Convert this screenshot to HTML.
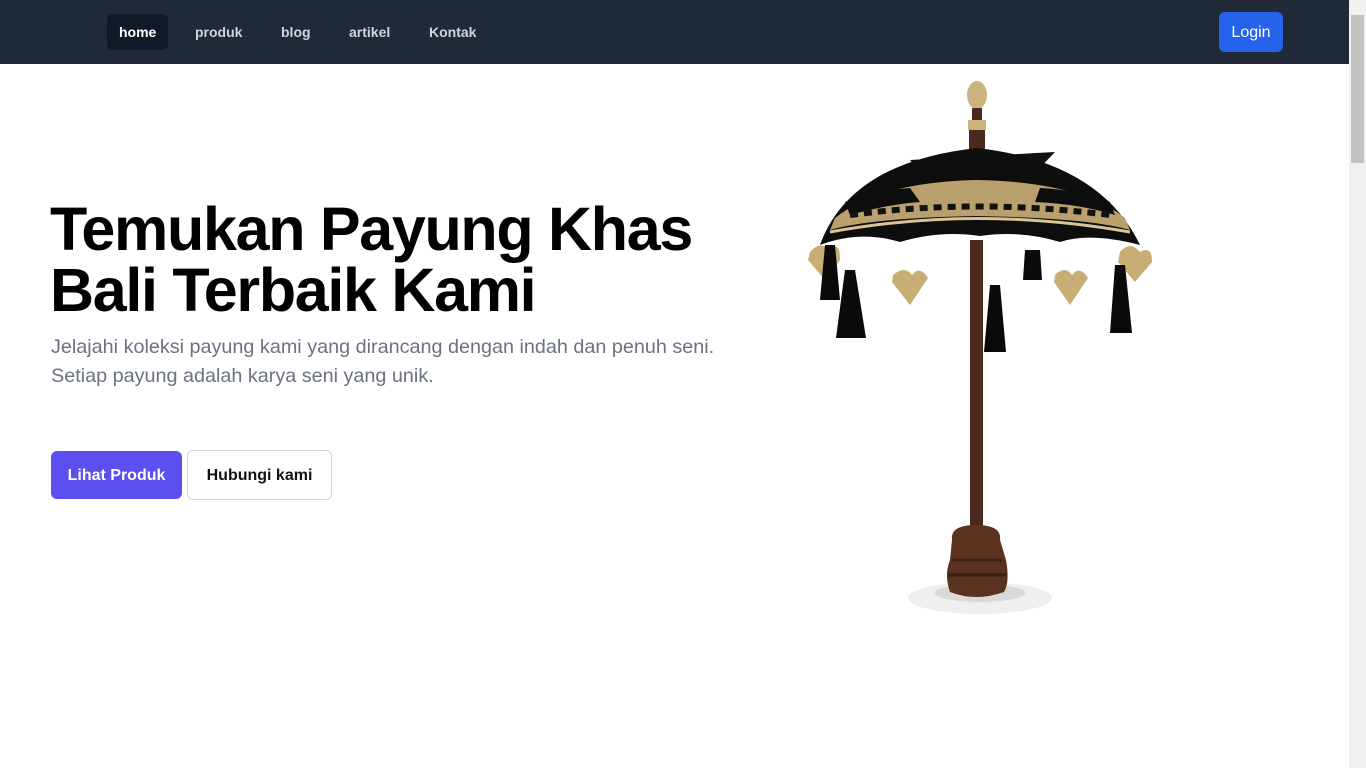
<!DOCTYPE html>
<html><head><meta charset="utf-8"><style>
*{margin:0;padding:0;box-sizing:border-box}
html,body{width:1366px;height:768px;overflow:hidden;background:#fff;font-family:"Liberation Sans",sans-serif}
nav{position:absolute;left:0;top:0;width:1349px;height:64px;background:#1f2937}
nav a{position:absolute;top:14px;height:36px;line-height:36px;font-size:14px;font-weight:bold;color:#d1d5db;text-decoration:none;padding:0 12px;border-radius:6px}
nav a.act{background:#111827;color:#fff}
.login{position:absolute;left:1219px;top:12px;width:64px;height:40px;background:#2563eb;color:#fff;border-radius:6px;font-size:16px;text-align:center;line-height:42px}
.sb{position:absolute;left:1349px;top:0;width:17px;height:768px;background:#f1f1f1}
.th{position:absolute;left:1351px;top:15px;width:13px;height:148px;background:#c1c1c1}
h1{position:absolute;left:50px;top:199px;font-size:61px;line-height:61px;font-weight:900;color:#000;letter-spacing:-1.3px}
p{position:absolute;left:51px;top:333px;font-size:19.8px;line-height:29px;color:#6b7280}
.b1{position:absolute;left:51px;top:451px;width:131px;height:48px;background:#5b4ff0;color:#fff;border-radius:6px;font-size:16px;font-weight:bold;text-align:center;line-height:50px}
.b2{position:absolute;left:187px;top:450px;width:145px;height:50px;border:1px solid #d1d5db;color:#111;border-radius:6px;font-size:16px;font-weight:bold;text-align:center;line-height:50px}
svg{position:absolute;left:790px;top:70px}
</style></head><body>
<nav>
<a class="act" style="left:107px">home</a>
<a style="left:183px">produk</a>
<a style="left:269px">blog</a>
<a style="left:337px">artikel</a>
<a style="left:417px">Kontak</a>
<div class="login">Login</div>
</nav>
<div class="sb"></div><div class="th"></div>
<h1>Temukan Payung Khas<br>Bali Terbaik Kami</h1>
<p>Jelajahi koleksi payung kami yang dirancang dengan indah dan penuh seni.<br>Setiap payung adalah karya seni yang unik.</p>
<div class="b1">Lihat Produk</div>
<div class="b2">Hubungi kami</div>
<svg width="380" height="560" viewBox="0 0 380 560">
<ellipse cx="190" cy="528" rx="72" ry="16" fill="#efefef"/>
<ellipse cx="190" cy="523" rx="45" ry="9" fill="#d9d9d9"/>
<rect x="180" y="170" width="13" height="300" fill="#4a2a1c"/>
<path d="M162 470 Q160 455 186 455 Q212 455 210 470 L216 490 Q220 512 214 522 Q186 532 160 522 Q154 505 160 490Z" fill="#5a3220"/>
<path d="M162 490 H212 M158 505 H216" stroke="#3a1e12" stroke-width="3"/>
<ellipse cx="187" cy="25" rx="10" ry="14" fill="#c9b27c"/>
<rect x="182" y="38" width="10" height="12" fill="#4a2a1c"/>
<rect x="178" y="50" width="18" height="10" fill="#c9b27c"/>
<rect x="179" y="60" width="16" height="20" fill="#4a2a1c"/>
<path d="M120 90 L265 82 L240 108 L130 102Z" fill="#111"/>
<path d="M30 175 Q60 92 187 78 Q310 92 350 175 Q300 162 270 172 Q230 160 190 166 Q150 160 110 172 Q70 160 30 175Z" fill="#0d0d0d"/>
<path d="M45 148 Q90 112 187 110 Q290 112 335 148 L340 160 Q300 148 187 146 Q80 148 40 160Z" fill="#b9a06d"/>
<path d="M55 132 Q90 120 120 118 L130 132 Q100 134 60 145Z M250 118 Q290 120 320 132 L325 145 Q290 134 245 132Z" fill="#0d0d0d"/>
<path d="M60 145 Q187 128 320 145" stroke="#111" stroke-width="6" fill="none" stroke-dasharray="8 6"/>
<path d="M40 162 Q187 135 340 162" stroke="#d8c494" stroke-width="3" fill="none"/>
<g fill="#c8ae74">
<path d="M20 182 Q30 170 40 180 Q50 170 50 190 L35 210 L18 190Z"/>
<path d="M103 205 Q115 195 122 205 Q130 195 138 208 L120 235 L102 212Z"/>
<path d="M265 205 Q275 195 282 205 Q290 195 298 208 L280 235 L264 212Z"/>
<path d="M330 182 Q340 170 350 182 Q362 175 362 192 L345 212 L328 192Z"/>
</g>
<g fill="#0a0a0a">
<path d="M55 200 L65 200 L76 268 L46 268Z"/>
<path d="M35 175 L45 175 L50 230 L30 230Z"/>
<path d="M200 215 L210 215 L216 282 L194 282Z"/>
<path d="M235 180 L250 180 L252 210 L233 210Z"/>
<path d="M325 195 L335 195 L342 263 L320 263Z"/>
</g>
</svg>
</body></html>
